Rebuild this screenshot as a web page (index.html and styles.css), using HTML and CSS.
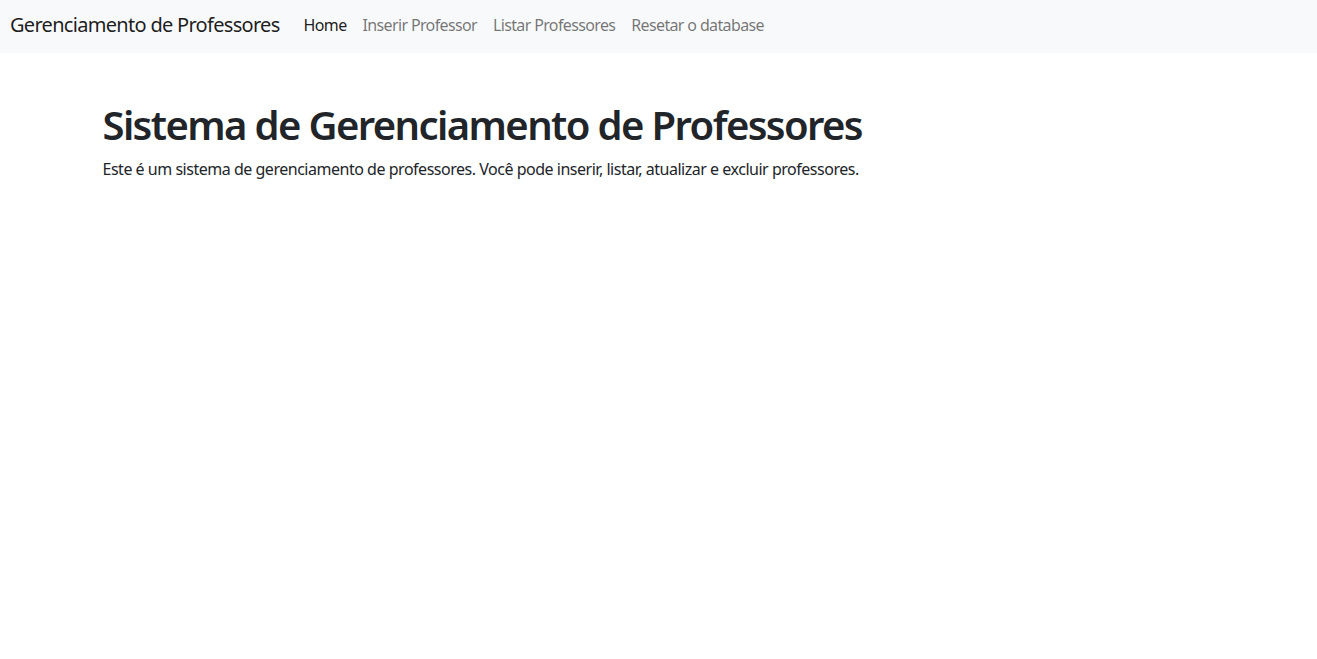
FILE: index.html
```html
<!DOCTYPE html>
<html lang="pt-BR">
<head>
<meta charset="utf-8">
<title>Gerenciamento de Professores</title>
<link rel="stylesheet" href="styles.css">
</head>
<body>
<nav class="navbar">
  <div class="navbar-inner">
    <a class="brand" href="#">Gerenciamento de Professores</a>
    <ul class="nav">
      <li><a class="nav-link active" href="#">Home</a></li>
      <li><a class="nav-link" href="#">Inserir Professor</a></li>
      <li><a class="nav-link" href="#">Listar Professores</a></li>
      <li><a class="nav-link" href="#">Resetar o database</a></li>
    </ul>
  </div>
</nav>
<main class="container">
  <h1 class="title">Sistema de Gerenciamento de Professores</h1>
  <p class="lead-text">Este é um sistema de gerenciamento de professores. Você pode inserir, listar, atualizar e excluir professores.</p>
</main>
</body>
</html>
```
FILE: styles.css
```css
* { box-sizing: border-box; }
html, body { margin: 0; padding: 0; }
body {
  font-family: "Noto Sans", "Open Sans", sans-serif;
  font-size: 16px;
  line-height: 1.5;
  color: #212529;
  background: #fff;
  letter-spacing: -0.03em;
}
.navbar {
  background: #f8f9fa;
  height: 53px;
  display: flex;
  align-items: center;
  padding-bottom: 4px;
}
.navbar-inner {
  display: flex;
  align-items: center;
  padding: 0 10px;
  width: 100%;
}
.brand {
  font-size: 20px;
  color: rgba(0,0,0,.9);
  text-decoration: none;
  margin-right: 16px;
  line-height: 30px;
  letter-spacing: -0.035em;
}
.nav {
  display: flex;
  list-style: none;
  margin: 0;
  padding: 0;
}
.nav-link {
  display: block;
  padding: 8px;
  color: rgba(0,0,0,.55);
  text-decoration: none;
  letter-spacing: -0.04em;
}
.nav-link.active { color: rgba(0,0,0,.9); }
.container {
  max-width: 1140px;
  margin: 48px auto 0;
  padding: 0 12px 0 14px;
}
.title {
  font-size: 40px;
  font-weight: 600;
  line-height: 1.2;
  margin: 0 0 8px;
  letter-spacing: -0.04em;
}
.lead-text { margin: 0 0 16px; }
```
